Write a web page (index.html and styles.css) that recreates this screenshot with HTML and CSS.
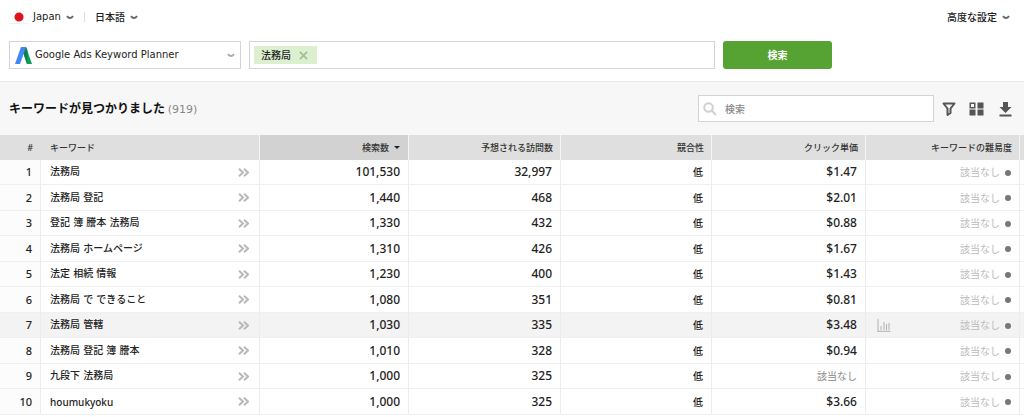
FILE: index.html
```html
<!DOCTYPE html>
<html lang="ja">
<head>
<meta charset="utf-8">
<title>キーワード検索</title>
<link rel="stylesheet" href="styles.css">
</head>
<body>
<header class="search-area">
  <nav class="options">
    <button class="option" type="button"><span class="flag"></span><span class="latin">Japan</span><svg class="chevron" viewBox="0 0 8 5"><path d="M1 1.200Q4 5 7 1.200"/></svg></button>
    <span class="divider"></span>
    <button class="option" type="button">日本語<svg class="chevron" viewBox="0 0 8 5"><path d="M1 1.200Q4 5 7 1.200"/></svg></button>
    <button class="option option-end" type="button">高度な設定<svg class="chevron" viewBox="0 0 8 5"><path d="M1 1.200Q4 5 7 1.200"/></svg></button>
  </nav>
  <form class="search-form">
    <button class="source" type="button">
      <svg class="ads-logo" viewBox="0 0 17 17"><path fill="#0f9d58" d="M6 0h5l6 17h-5z"/><path fill="#0b7f48" d="M8.500 6L11 0l1.500 4L12 17z"/><path fill="#4285f4" d="M6 0h5L5 17H0z"/></svg>
      <span class="source-name">Google Ads Keyword Planner</span>
      <svg class="chevron chevron-light" viewBox="0 0 8 5"><path d="M1 1.200Q4 5 7 1.200"/></svg>
    </button>
    <div class="terms">
      <span class="term">法務局<button class="term-remove" type="button" aria-label="削除"><svg viewBox="0 0 10 10"><path d="M1 1l8 8M9 1L1 9"/></svg></button></span>
      <input class="terms-input" type="text" aria-label="キーワード">
    </div>
    <button class="submit" type="submit">検索</button>
  </form>
</header>
<main>
  <div class="toolbar">
    <h1 class="title">キーワードが見つかりました <span class="count">(919)</span></h1>
    <label class="filter">
      <svg class="filter-icon" viewBox="0 0 14 14"><circle cx="5.500" cy="5.500" r="4.300"/><path d="M8.800 8.800L13 13"/></svg>
      <input class="filter-input" type="text" placeholder="検索" aria-label="検索">
    </label>
    <div class="tools">
      <button class="tool" type="button" aria-label="フィルター"><svg viewBox="0 0 16 16"><path fill="none" stroke="#555" stroke-width="2" stroke-linejoin="round" d="M2.500 2.500h11L9.500 7.500v4.500l-3 2V7.500z"/></svg></button>
      <button class="tool" type="button" aria-label="列"><svg viewBox="0 0 16 16"><path fill="#555" d="M8.500 1.500h6v6h-6zM.5 8.500h6v6h-6zM8.500 8.500h6v6h-6z"/><path fill="none" stroke="#555" stroke-width="1.500" d="M1.250 2.250h4.500v4.500h-4.500z"/></svg></button>
      <button class="tool" type="button" aria-label="ダウンロード"><svg viewBox="0 0 16 16"><path fill="#555" d="M6 1h5v5h3.500l-6 6L2.500 6H6zM2.500 13.500h12v2h-12z"/></svg></button>
    </div>
  </div>
  <table class="keywords">
    <colgroup><col class="c-rank"><col class="c-word"><col class="c-num"><col class="c-visits"><col class="c-rival"><col class="c-price"><col class="c-price"><col class="c-rest"></colgroup>
    <thead>
      <tr><th>#</th><th class="word">キーワード</th><th class="sorted">検索数<span class="caret"></span></th><th>予想される訪問数</th><th>競合性</th><th>クリック単価</th><th>キーワードの難易度</th><th></th></tr>
    </thead>
    <tbody>
      <tr><td class="rank">1</td><td class="word"><div class="word-line">法務局<svg class="more" viewBox="0 0 11 9"><path d="M1 .8l4 3.700-4 3.700M6 .8l4 3.700-4 3.700"/></svg></div></td><td class="num">101,530</td><td class="num">32,997</td><td>低</td><td class="num">$1.47</td><td class="none">該当なし<span class="dot"></span></td><td></td></tr>
      <tr><td class="rank">2</td><td class="word"><div class="word-line">法務局 登記<svg class="more" viewBox="0 0 11 9"><path d="M1 .8l4 3.700-4 3.700M6 .8l4 3.700-4 3.700"/></svg></div></td><td class="num">1,440</td><td class="num">468</td><td>低</td><td class="num">$2.01</td><td class="none">該当なし<span class="dot"></span></td><td></td></tr>
      <tr><td class="rank">3</td><td class="word"><div class="word-line">登記 簿 謄本 法務局<svg class="more" viewBox="0 0 11 9"><path d="M1 .8l4 3.700-4 3.700M6 .8l4 3.700-4 3.700"/></svg></div></td><td class="num">1,330</td><td class="num">432</td><td>低</td><td class="num">$0.88</td><td class="none">該当なし<span class="dot"></span></td><td></td></tr>
      <tr><td class="rank">4</td><td class="word"><div class="word-line">法務局 ホームページ<svg class="more" viewBox="0 0 11 9"><path d="M1 .8l4 3.700-4 3.700M6 .8l4 3.700-4 3.700"/></svg></div></td><td class="num">1,310</td><td class="num">426</td><td>低</td><td class="num">$1.67</td><td class="none">該当なし<span class="dot"></span></td><td></td></tr>
      <tr><td class="rank">5</td><td class="word"><div class="word-line">法定 相続 情報<svg class="more" viewBox="0 0 11 9"><path d="M1 .8l4 3.700-4 3.700M6 .8l4 3.700-4 3.700"/></svg></div></td><td class="num">1,230</td><td class="num">400</td><td>低</td><td class="num">$1.43</td><td class="none">該当なし<span class="dot"></span></td><td></td></tr>
      <tr><td class="rank">6</td><td class="word"><div class="word-line">法務局 で できること<svg class="more" viewBox="0 0 11 9"><path d="M1 .8l4 3.700-4 3.700M6 .8l4 3.700-4 3.700"/></svg></div></td><td class="num">1,080</td><td class="num">351</td><td>低</td><td class="num">$0.81</td><td class="none">該当なし<span class="dot"></span></td><td></td></tr>
      <tr class="active"><td class="rank">7</td><td class="word"><div class="word-line">法務局 管轄<svg class="more" viewBox="0 0 11 9"><path d="M1 .8l4 3.700-4 3.700M6 .8l4 3.700-4 3.700"/></svg></div></td><td class="num">1,030</td><td class="num">335</td><td>低</td><td class="num">$3.48</td><td class="none"><div class="with-chart"><svg class="chart" viewBox="0 0 14 13"><path d="M1 0v12.500M.5 12.300h13M4 7v4M7 3v8M9.500 5v6M12 4v7"/></svg><span>該当なし<span class="dot"></span></span></div></td><td></td></tr>
      <tr><td class="rank">8</td><td class="word"><div class="word-line">法務局 登記 簿 謄本<svg class="more" viewBox="0 0 11 9"><path d="M1 .8l4 3.700-4 3.700M6 .8l4 3.700-4 3.700"/></svg></div></td><td class="num">1,010</td><td class="num">328</td><td>低</td><td class="num">$0.94</td><td class="none">該当なし<span class="dot"></span></td><td></td></tr>
      <tr><td class="rank">9</td><td class="word"><div class="word-line">九段下 法務局<svg class="more" viewBox="0 0 11 9"><path d="M1 .8l4 3.700-4 3.700M6 .8l4 3.700-4 3.700"/></svg></div></td><td class="num">1,000</td><td class="num">325</td><td>低</td><td class="no-price">該当なし</td><td class="none">該当なし<span class="dot"></span></td><td></td></tr>
      <tr><td class="rank">10</td><td class="word"><div class="word-line word-latin">houmukyoku<svg class="more" viewBox="0 0 11 9"><path d="M1 .8l4 3.700-4 3.700M6 .8l4 3.700-4 3.700"/></svg></div></td><td class="num">1,000</td><td class="num">325</td><td>低</td><td class="num">$3.66</td><td class="none">該当なし<span class="dot"></span></td><td></td></tr>
    </tbody>
  </table>
</main>
</body>
</html>
```
FILE: styles.css
```css
* { box-sizing: border-box; }
body {
  margin: 0;
  background: #fff;
  color: #222;
  font: 500 10px/14px "Noto Sans", "Noto Sans CJK JP", sans-serif;
}
button, input { font: inherit; color: inherit; }
button { margin: 0; padding: 0; border: 0; background: none; cursor: pointer; }
svg { display: block; flex: none; }
.latin { font: 400 10px/14px "DejaVu Sans", sans-serif; }

.search-area { padding: 8px 9px 12px; border-bottom: 1px solid #e8e8e8; }
.options { display: flex; align-items: center; height: 18px; }
.option { display: flex; align-items: center; gap: 5px; }
.option-end { margin-left: auto; margin-right: 5px; }
.flag {
  width: 19px;
  height: 13px;
  border-bottom: 1px solid #eee;
  background: radial-gradient(circle at 10px 6px, #e01020 4px, transparent 5px);
}
.divider { width: 1px; height: 10px; margin: 0 10px; background: #ddd; }
.chevron { width: 8px; height: 5px; fill: none; stroke: #666; stroke-width: 2; }
.chevron-light { stroke: #aaa; }

.search-form { display: flex; gap: 8px; margin-top: 15px; }
.source {
  display: flex;
  align-items: center;
  gap: 3px;
  width: 232px;
  height: 28px;
  padding: 0 5px;
  border: 1px solid #d4d4d8;
  text-align: left;
}
.source-name { flex: 1; font: 400 10px/14px "DejaVu Sans", sans-serif; }
.ads-logo { width: 17px; height: 17px; }
.terms {
  display: flex;
  flex: 1;
  align-items: center;
  height: 28px;
  padding: 0 4px;
  border: 1px solid #d4d4d8;
}
.term {
  display: flex;
  align-items: center;
  gap: 8px;
  height: 18px;
  padding: 0 9px 0 7px;
  background: #dcf0d0;
}
.term-remove svg { width: 9px; height: 9px; fill: none; stroke: #a3bf98; stroke-width: 2; }
.terms-input { flex: 1; min-width: 0; border: 0; outline: 0; background: none; }
.submit {
  width: 109px;
  height: 28px;
  margin-right: 183px;
  border-radius: 3px;
  background: #56a333;
  color: #fff;
  font-weight: 700;
}

.toolbar {
  display: flex;
  align-items: center;
  height: 53px;
  padding: 0 9px;
  background: #f7f7f7;
}
.title { flex: 1; margin: 0; color: #111; font: 700 12px/18px "Noto Sans CJK JP", sans-serif; }
.count { color: #888; font: 400 11px/18px "DejaVu Sans", sans-serif; }
.filter {
  display: flex;
  align-items: center;
  gap: 8px;
  width: 236px;
  height: 27px;
  padding: 0 4px;
  border: 1px solid #d4d4d8;
  background: #fff;
}
.filter-icon { width: 14px; height: 14px; fill: none; stroke: #d0d0d0; stroke-width: 2; }
.filter-input { flex: 1; min-width: 0; padding: 0; border: 0; outline: 0; background: none; }
.filter-input::placeholder { color: #888; opacity: 1; }
.tools { display: flex; gap: 12px; margin-left: 7px; margin-right: 2px; }
.tool svg { width: 16px; height: 16px; }

.keywords { width: 100%; border-collapse: separate; border-spacing: 0; table-layout: fixed; }
.c-rank { width: 41px; }
.c-num { width: 149px; }
.c-visits { width: 152px; }
.c-rival { width: 151px; }
.c-price { width: 154px; }
.c-rest { width: 4px; }
.keywords th, .keywords td {
  height: 25px;
  padding: 0 8px 0 11px;
  border-right: 1px solid #ececec;
  text-align: right;
  white-space: nowrap;
}
.keywords th {
  padding-right: 7px;
  border-color: #f5f5f5;
  background: #dfdfdf;
  color: #333;
  font-size: 9px;
  font-weight: 500;
}
.keywords th:first-child { border-color: #dfdfdf; }
.keywords .sorted { background: #d2d2d2; }
.keywords .word { padding: 0 10px 0 9px; text-align: left; }
.keywords td { border-bottom: 1px solid #f0f0f0; }
.keywords tbody tr:nth-child(even) td { height: 26px; }
.keywords .rank { background: #fcfcfc; font-size: 11px; }
.keywords .active td { background: #f3f3f3; }
.keywords th:last-child, .keywords td:last-child { padding: 0; border-right: 0; }
.word-line {
  display: flex;
  align-items: center;
  justify-content: space-between;
  font-family: "DejaVu Sans", "Noto Sans CJK JP", sans-serif;
}
.word-latin { font-family: "Noto Sans", sans-serif; }
.more { width: 11px; height: 9px; fill: none; stroke: #b8b8b8; stroke-width: 2; }
.keywords .num { font-size: 12px; }
.keywords .none { padding-right: 7px; color: #bbb; font-weight: 400; }
.keywords .no-price { color: #888; font-weight: 400; }
.dot {
  display: inline-block;
  width: 6px;
  height: 6px;
  margin: 0 1px 1px 5px;
  border-radius: 50%;
  background: #777;
  vertical-align: middle;
}
.with-chart { display: flex; align-items: center; justify-content: space-between; }
.chart { width: 14px; height: 13px; fill: none; stroke: #b0b0b0; stroke-width: 1; }
.caret {
  display: inline-block;
  margin: 0 1px 1px 5px;
  border: 3px solid transparent;
  border-top: 3px solid #222;
  border-bottom: 0;
  vertical-align: middle;
}
```
